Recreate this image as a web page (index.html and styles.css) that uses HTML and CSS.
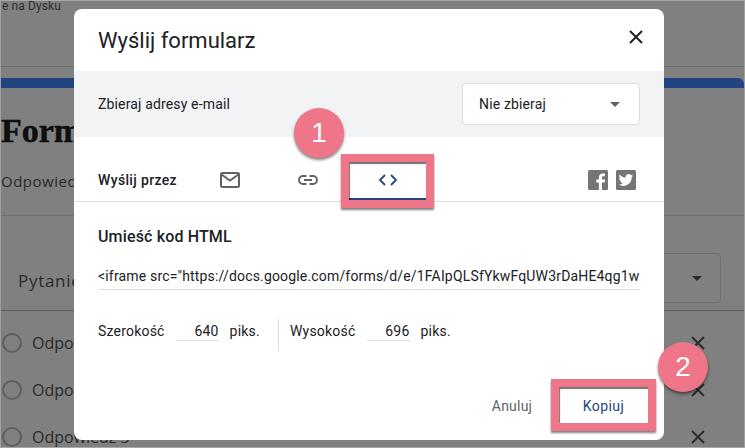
FILE: index.html
```html
<!DOCTYPE html>
<html lang="pl">
<head>
<meta charset="utf-8">
<title>Wyślij formularz</title>
<link rel="stylesheet" href="styles.css">
</head>
<body>
<div class="page">
  <div class="drive">e na Dysku</div>
  <div class="blue-bar"></div>
  <div class="form-title">Formularz</div>
  <div class="tab-label">Odpowiedzi</div>
  <div class="card">
    <div class="q-row">
      <span class="q-text">Pytanie</span>
      <div class="q-select"><svg class="q-caret" viewBox="0 0 10 5"><path d="M0 0h10L5 5z"/></svg></div>
    </div>
    <div class="answers">
      <div class="answer"><span class="radio"></span><span class="a-text">Odpowiedź 1</span><svg class="a-x" viewBox="0 0 14 14"><path d="M1 1l12 12M13 1L1 13"/></svg></div>
      <div class="answer"><span class="radio"></span><span class="a-text">Odpowiedź 2</span><svg class="a-x" viewBox="0 0 14 14"><path d="M1 1l12 12M13 1L1 13"/></svg></div>
      <div class="answer"><span class="radio"></span><span class="a-text">Odpowiedź 3</span><svg class="a-x" viewBox="0 0 14 14"><path d="M1 1l12 12M13 1L1 13"/></svg></div>
    </div>
  </div>
</div>

<div class="modal">
  <header class="m-head">
    <h1 class="m-title">Wyślij formularz</h1>
    <svg class="m-close" viewBox="0 0 14 14"><path d="M1 1l12 12M13 1L1 13"/></svg>
  </header>
  <div class="m-email">
    <span>Zbieraj adresy e-mail</span>
    <div class="m-select"><span>Nie zbieraj</span><svg class="m-caret" viewBox="0 0 10 5"><path d="M0 0h10L5 5z"/></svg></div>
  </div>
  <div class="m-tabs">
    <span class="m-send">Wyślij przez</span>
    <div class="m-tab tab-mail">
      <svg width="20" height="16" viewBox="0 0 20 16"><rect x="1" y="1" width="18" height="14" rx="1.5" fill="none" stroke="#5f6368" stroke-width="2"/><path d="M1.5 2.5L10 8.5l8.500-6" fill="none" stroke="#5f6368" stroke-width="2"/></svg>
    </div>
    <div class="m-tab tab-link">
      <svg width="20" height="10" viewBox="0 0 20 10"><path d="M8.500 1H5a4 4 0 0 0 0 8h3.500M11.500 1H15a4 4 0 0 1 0 8h-3.500M6 5h8" fill="none" stroke="#5f6368" stroke-width="1.900"/></svg>
    </div>
    <div class="m-tab tab-code">
      <svg width="20" height="12" viewBox="0 0 20 12"><path d="M7 1L2 6l5 5M13 1l5 5-5 5" fill="none" stroke="#23457f" stroke-width="1.800"/></svg>
    </div>
    <div class="m-social">
      <svg width="20" height="20" viewBox="0 0 20 20"><rect width="20" height="20" rx="1.500" fill="#757575"/><path d="M14 20v-7.500h2.600l.4-3h-3V7.700c0-.9.300-1.400 1.500-1.400H17V3.600c-.3 0-1.200-.1-2.300-.1-2.300 0-3.800 1.400-3.800 3.900v2.100H8.300v3h2.600V20z" fill="#fff"/></svg>
      <svg width="20" height="20" viewBox="0 0 20 20"><rect width="20" height="20" rx="1.500" fill="#757575"/><path d="M17 5.400c-.5.200-1.100.4-1.700.5.600-.4 1-.9 1.300-1.600-.6.300-1.200.6-1.900.7a3 3 0 0 0-5.100 2.700C7.200 7.600 5 6.400 3.600 4.600c-.8 1.400-.4 3.100.9 4-.5 0-1-.1-1.400-.4 0 1.500 1 2.700 2.400 3-.4.100-.9.100-1.300 0 .4 1.200 1.500 2 2.800 2.100A6 6 0 0 1 2.600 14.500 8.500 8.500 0 0 0 15.700 7c.5-.4 1-1 1.300-1.600z" fill="#fff"/></svg>
    </div>
  </div>
  <div class="m-body">
    <h2 class="m-h2">Umieść kod HTML</h2>
    <div class="m-code">&lt;iframe src="https://docs.google.com/forms/d/e/1FAIpQLSfYkwFqUW3rDaHE4qg1w</div>
    <div class="m-dims">
      <div class="dim dim-first"><span>Szerokość</span><span class="dim-val">640</span><span>piks.</span></div>
      <div class="dim dim-second"><span>Wysokość</span><span class="dim-val">696</span><span>piks.</span></div>
    </div>
  </div>
  <footer class="m-foot">
    <button class="btn btn-cancel">Anuluj</button>
    <button class="btn btn-copy">Kopiuj</button>
  </footer>
</div>

<div class="mark mark-code"></div>
<div class="mark mark-copy"></div>
<div class="badge badge-1">1</div>
<div class="badge badge-2">2</div>
</body>
</html>
```
FILE: styles.css
```css
* { box-sizing: border-box; }
html, body { margin: 0; padding: 0; }
body {
  width: 745px;
  height: 448px;
  overflow: hidden;
  position: relative;
  background: #a8a8a8;
  font-family: Roboto, "Liberation Sans", sans-serif;
}
.page {
  height: 447px;
  overflow: hidden;
  background: #808080;
  border-top: 1px solid #a8a8a8;
  border-left: 1px solid #a0a0a0;
  border-right: 1px solid #a0a0a0;
  color: #1a1a1a;
}
.drive {
  height: 66px;
  padding-left: 1px;
  font-size: 12px;
  line-height: 10px;
  letter-spacing: 0.1px;
  color: #2f2f2f;
  border-bottom: 1px solid #6e6e6e;
}
.blue-bar {
  height: 10px;
  margin-top: 11px;
  background: #23457f;
  border-radius: 0 6px 0 0;
}
.form-title {
  margin-top: 25px;
  height: 36px;
  font-family: "Liberation Serif", serif;
  font-weight: 700;
  font-size: 34px;
  line-height: 36px;
  color: #0f0f0f;
  -webkit-text-stroke: 0.5px #0f0f0f;
}
.tab-label {
  margin-top: 22px;
  height: 44px;
  font-family: "Open Sans", sans-serif;
  font-size: 15px;
  line-height: 20px;
  letter-spacing: 0.5px;
  color: #2a2a2a;
}
.card {
  border-top: 1px solid #6e6e6e;
  height: 240px;
}
.q-row {
  height: 95px;
  padding: 37px 23px 0 17px;
  display: flex;
  justify-content: space-between;
  align-items: flex-start;
  border-bottom: 1px solid #5c5c5c;
}
.q-text {
  font-family: "Open Sans", sans-serif;
  font-size: 17px;
  line-height: 22px;
  letter-spacing: 0.7px;
  color: #2a2a2a;
  margin-top: 17px;
}
.q-select {
  width: 200px;
  height: 50px;
  border: 1px solid #6e6e6e;
  border-radius: 4px;
  display: flex;
  justify-content: flex-end;
  align-items: center;
  padding-right: 18px;
}
.q-caret { width: 10px; height: 5px; fill: #2a2a2a; }
.answers { padding-top: 8px; }
.answer {
  height: 47px;
  display: flex;
  align-items: center;
  padding: 0 39px 0 1px;
}
.radio {
  width: 20px;
  height: 20px;
  border: 2px solid #5e5e5e;
  border-radius: 50%;
}
.a-text {
  margin-left: 10px;
  font-family: "Open Sans", sans-serif;
  font-size: 16px;
  color: #2a2a2a;
  white-space: nowrap;
}
.a-x { width: 14px; height: 14px; margin-left: auto; fill: none; stroke: #2a2a2a; stroke-width: 1.800; }

.modal {
  position: absolute;
  left: 74px;
  top: 9px;
  width: 590px;
  height: 431px;
  background: #fff;
  border-radius: 8px;
  display: flex;
  flex-direction: column;
  color: #202124;
}
.m-head {
  height: 62px;
  padding: 0 21px 0 24px;
  display: flex;
  justify-content: space-between;
  align-items: center;
}
.m-title {
  margin: 0;
  font-size: 22px;
  font-weight: 400;
  color: #202124;
}
.m-close { width: 14px; height: 14px; align-self: flex-start; margin-top: 21px; fill: none; stroke: #202124; stroke-width: 2; }
.m-email {
  height: 66px;
  background: #f1f3f4;
  padding: 0 24px;
  display: flex;
  justify-content: space-between;
  align-items: center;
  font-size: 14px;
  letter-spacing: 0.15px;
}
.m-select {
  width: 178px;
  height: 42px;
  background: #fff;
  border: 1px solid #dadce0;
  border-radius: 4px;
  display: flex;
  justify-content: space-between;
  align-items: center;
  padding: 0 19px 0 16px;
}
.m-caret { width: 10px; height: 5px; fill: #5f6368; }
.m-tabs {
  height: 65px;
  padding: 21px 28px 0 24px;
  border-bottom: 1px solid #dadce0;
  display: flex;
  align-items: center;
}
.m-send { font-size: 14px; font-weight: 500; letter-spacing: 0.35px; width: 122px; padding-top: 1px; }
.m-tab { display: flex; justify-content: center; align-items: center; height: 100%; width: 77px; }
.tab-mail { width: 20px; padding-top: 1px; }
.tab-link { width: 20px; margin-left: 58px; padding-top: 1px; }
.tab-code {
  margin-left: 31px;
  height: 39px;
  align-self: flex-end;
  margin-bottom: 1px;
  border-bottom: 2px solid #23457f;
}
.m-social { margin-left: auto; display: flex; gap: 8px; padding-top: 1px; }
.m-body { flex: 1; padding: 0 24px; }
.m-h2 { margin: 26px 0 0; font-size: 16px; font-weight: 500; line-height: 18px; letter-spacing: 0.15px; }
.m-code {
  margin-top: 20px;
  height: 24px;
  font-size: 14px;
  line-height: 20px;
  white-space: nowrap;
  overflow: hidden;
  border-bottom: 1px solid #dadce0;
  letter-spacing: 0.17px;
}
.m-dims {
  margin-top: 29px;
  display: flex;
  height: 32px;
  font-size: 14px;
  letter-spacing: 0.2px;
}
.dim { display: flex; align-items: flex-start; height: 32px; padding-top: 3px; line-height: 18px; }
.dim-first { width: 181px; border-right: 1px solid #dadce0; }
.dim-second { padding-left: 11px; }
.dim-val {
  height: 19px;
  text-align: right;
  border-bottom: 1px solid #dadce0;
  margin: 0 11px;
  width: 43px;
}
.m-foot {
  height: 70px;
  padding: 0 16px 17px 0;
  display: flex;
  justify-content: flex-end;
  align-items: flex-end;
}
.btn {
  border: 0;
  background: none;
  font-family: inherit;
  font-size: 14px;
  letter-spacing: 0.2px;
  height: 35px;
  padding: 0;
}
.btn-cancel { color: #5f6368; width: 60px; margin-right: 17px; }
.btn-copy { color: #23457f; width: 89px; letter-spacing: 0.4px; }

.mark {
  position: absolute;
  border: 8px solid #ee7688;
  box-shadow: 0 2px 2px rgba(0,0,0,.5), inset 1px 2px 1px rgba(0,0,0,.55);
}
.mark-code { left: 341px; top: 154px; width: 93px; height: 54px; }
.mark-copy { left: 551px; top: 379px; width: 105px; height: 52px; }
.badge {
  position: absolute;
  width: 50px;
  height: 50px;
  border-radius: 50%;
  background: #ee7688;
  color: #fff;
  font-family: "Liberation Sans", sans-serif;
  font-size: 28px;
  line-height: 50px;
  text-align: center;
  box-shadow: 0 2px 3px rgba(0,0,0,.5);
}
.badge-1 { left: 294px; top: 108px; }
.badge-2 { left: 658px; top: 342px; }
```
